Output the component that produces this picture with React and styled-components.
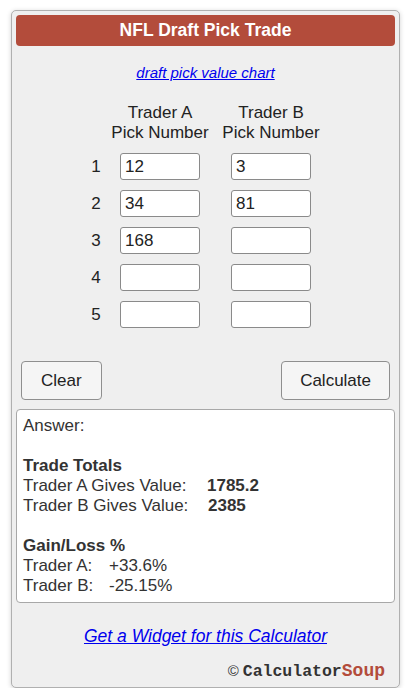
import React from 'react'
import styled, { createGlobalStyle } from 'styled-components'

const GlobalStyle = createGlobalStyle`
  body {
    margin: 0;
    background: #fff;
    font-family: "Liberation Sans", Arial, sans-serif;
    color: #222;
  }
`

const Panel = styled.div`
  box-sizing: border-box;
  width: 389px;
  margin: 10px 0 0 11px;
  padding: 4px 4px 5px;
  background: #efefef;
  border: 1px solid #b0b0b0;
  border-radius: 5px;
  box-shadow: 0 1px 5px rgba(0, 0, 0, 0.18);
`

const Header = styled.h1`
  margin: 0;
  height: 31px;
  line-height: 31px;
  background: #b34c3b;
  border-radius: 4px;
  color: #fff;
  font-size: 17.5px;
  font-weight: bold;
  text-align: center;
`

const LinkLine = styled.div`
  margin-top: ${(p) => p.top}px;
  text-align: center;
  font-size: ${(p) => p.size}px;
  line-height: ${(p) => p.lh}px;
`

const Link = styled.a`
  color: #0000ee;
  font-style: italic;
  text-decoration: underline;
`

const Grid = styled.div`
  display: grid;
  grid-template-columns: 20px 94px 111px;
  justify-items: end;
  row-gap: 10px;
  margin: 22px 0 0 70px;
  font-size: 17px;
  align-items: center;
`

const ColHead = styled.div`
  display: flex;
  flex-direction: column;
  align-items: center;
  width: 80px;
  white-space: nowrap;
  line-height: 20px;
`

const RowNum = styled.div`
  justify-self: center;
`

const Input = styled.input`
  box-sizing: border-box;
  width: 80px;
  height: 27px;
  padding: 0 4px;
  border: 1px solid #8a8a8a;
  border-radius: 3px;
  background: #fff;
  font-family: "Liberation Sans", Arial, sans-serif;
  font-size: 17px;
  color: #222;
`

const ButtonRow = styled.div`
  display: flex;
  justify-content: space-between;
  margin-top: 33px;
  padding: 0 5px;
`

const Button = styled.button`
  height: 39px;
  padding: 0 ${(p) => p.pad}px;
  border: 1px solid #8f8f8f;
  border-radius: 4px;
  background: #f5f5f5;
  font-family: "Liberation Sans", Arial, sans-serif;
  font-size: 17px;
  color: #222;
`

const AnswerBox = styled.div`
  margin-top: 9px;
  padding: 6px;
  background: #fff;
  border: 1px solid #a8a8a8;
  border-radius: 4px;
  font-size: 17px;
  line-height: 20px;
  color: #333;
`

const Blank = styled.div`
  height: 20px;
`

const Heading = styled.div`
  font-weight: bold;
`

const Line = styled.div`
  display: flex;
`

const Label = styled.span`
  width: ${(p) => p.w}px;
`

const Value = styled.span`
  font-weight: ${(p) => (p.bold ? 'bold' : 'normal')};
`

const Footer = styled.div`
  margin-top: 15px;
  padding-right: 10px;
  text-align: right;
  line-height: 20px;
  font-family: "Liberation Mono", "Courier New", monospace;
  font-weight: bold;
  font-size: 16.5px;
  color: #333;
`

const Copy = styled.span`
  font-family: "Liberation Sans", Arial, sans-serif;
  font-weight: normal;
  font-size: 15px;
  margin-right: 4px;
`

const Soup = styled.span`
  color: #b34c3b;
  font-size: 18px;
`

const picks = [
  ['12', '3'],
  ['34', '81'],
  ['168', ''],
  ['', ''],
  ['', ''],
]

export default function App() {
  return (
    <>
      <GlobalStyle />
      <Panel>
        <Header>NFL Draft Pick Trade</Header>
        <LinkLine top={19} size={15} lh={16}>
          <Link href="#">draft pick value chart</Link>
        </LinkLine>

        <Grid>
          <div />
          <ColHead><span>Trader A</span><span>Pick Number</span></ColHead>
          <ColHead><span>Trader B</span><span>Pick Number</span></ColHead>
          {picks.map(([a, b], i) => (
            <React.Fragment key={i}>
              <RowNum>{i + 1}</RowNum>
              <Input defaultValue={a} />
              <Input defaultValue={b} />
            </React.Fragment>
          ))}
        </Grid>

        <ButtonRow>
          <Button pad={19}>Clear</Button>
          <Button pad={18}>Calculate</Button>
        </ButtonRow>

        <AnswerBox>
          <div>Answer:</div>
          <Blank />
          <Heading>Trade Totals</Heading>
          <Line><Label w={184}>Trader A Gives Value:</Label><Value bold>1785.2</Value></Line>
          <Line><Label w={185}>Trader B Gives Value:</Label><Value bold>2385</Value></Line>
          <Blank />
          <Heading>Gain/Loss %</Heading>
          <Line><Label w={86}>Trader A:</Label><Value>+33.6%</Value></Line>
          <Line><Label w={86}>Trader B:</Label><Value>-25.15%</Value></Line>
        </AnswerBox>

        <LinkLine top={23} size={17.5} lh={20}>
          <Link href="#">Get a Widget for this Calculator</Link>
        </LinkLine>

        <Footer>
          <Copy>©</Copy>Calculator<Soup>Soup</Soup>
        </Footer>
      </Panel>
    </>
  )
}
